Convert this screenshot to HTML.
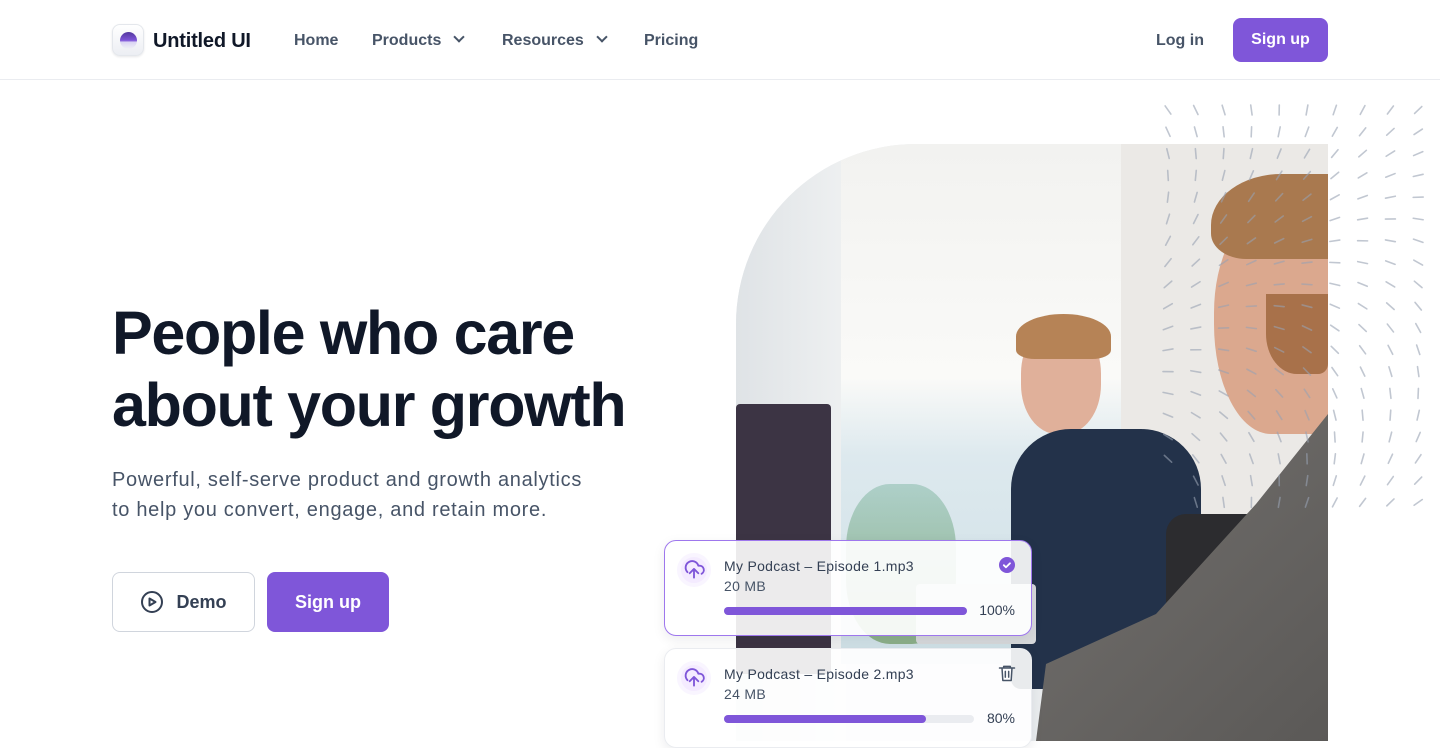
<!DOCTYPE html>
<html><head><meta charset="utf-8">
<style>
*{box-sizing:border-box;margin:0;padding:0}
body{width:1440px;height:741px;overflow:hidden;background:#fff;font-family:"Liberation Sans",sans-serif;position:relative}
.nav{height:80px;border-bottom:1px solid #eaecf0;position:relative}
.logo{position:absolute;left:112px;top:24px;width:32px;height:32px;border-radius:8px;background:linear-gradient(#fff,#eceef3);border:1px solid #e4e7ec;box-shadow:0 1px 2px rgba(16,24,40,.1)}
.logo i{position:absolute;left:7px;top:7px;width:17px;height:17px;border-radius:50%;background:linear-gradient(#53389e 0%,#7f56d9 50%,rgba(200,190,240,.6) 60%,rgba(255,255,255,0) 100%)}
.brand{position:absolute;left:153px;top:30px;font-size:20px;font-weight:bold;color:#101828;letter-spacing:-.2px}
.nl{position:absolute;top:32px;font-size:16px;font-weight:bold;color:#475467}
.chev{display:inline-block;width:8px;height:8px;border-right:2px solid #475467;border-bottom:2px solid #475467;transform:rotate(45deg);margin-left:14px;position:relative;top:-4px}
.btn{position:absolute;border-radius:8px;font-weight:bold;display:flex;align-items:center;justify-content:center}
h1{position:absolute;left:112px;top:297px;font-size:61px;line-height:72px;color:#101828;font-weight:bold;letter-spacing:-1.3px}
.sub{position:absolute;left:112px;top:465px;font-size:20px;line-height:30px;color:#475467;letter-spacing:.7px}
.photo{position:absolute;left:736px;top:144px;width:592px;height:597px;border-top-left-radius:180px;overflow:hidden;background:#e9ecee}
.photo div{position:absolute}
.card{position:absolute;left:664px;width:368px;border-radius:12px;background:rgba(255,255,255,.9);border:1px solid #eaecf0;box-shadow:0 4px 12px rgba(16,24,40,.08)}
.card .ic{position:absolute;left:12px;top:12px;width:34px;height:34px;border-radius:50%;background:#f4ebff;border:4px solid #f9f5ff}
.card .t{position:absolute;left:59px;top:17px;font-size:14px;color:#344054;letter-spacing:.3px}
.card .s{position:absolute;left:59px;top:37px;font-size:14px;color:#475467;letter-spacing:.3px}
.bar{position:absolute;left:59px;top:66px;height:8px;border-radius:4px;background:#eaecf0}
.bar b{display:block;height:8px;border-radius:4px;background:#7f56d9}
.pc{position:absolute;right:16px;top:61px;font-size:14px;color:#344054}
</style></head><body>
<div class="nav">
<div class="logo"><i></i></div>
<div class="brand">Untitled UI</div>
<div class="nl" style="left:294px">Home</div>
<div class="nl" style="left:372px">Products<span class="chev"></span></div>
<div class="nl" style="left:502px">Resources<span class="chev"></span></div>
<div class="nl" style="left:644px">Pricing</div>
<div class="nl" style="left:1156px">Log in</div>
<div class="btn" style="left:1233px;top:18px;width:95px;height:44px;background:#7f56d9;color:#fff;font-size:16px">Sign up</div>
</div>
<h1>People who care<br>about your growth</h1>
<div class="sub">Powerful, self-serve product and growth analytics<br>to help you convert, engage, and retain more.</div>
<div class="btn" style="left:112px;top:572px;width:143px;height:60px;border:1px solid #d0d5dd;color:#344054;font-size:18px;background:#fff">
<svg width="24" height="24" viewBox="0 0 24 24" style="margin-right:12px" fill="none" stroke="#344054" stroke-width="2" stroke-linejoin="round"><circle cx="12" cy="12" r="10"/><path d="M9.5 8.5v7l6-3.5z"/></svg>Demo</div>
<div class="btn" style="left:267px;top:572px;width:122px;height:60px;background:#7f56d9;color:#fff;font-size:18px">Sign up</div>

<div class="photo">
<div style="left:0;top:0;width:110px;height:597px;background:linear-gradient(90deg,#dfe3e6,#eef0f1)"></div>
<div style="left:105px;top:0;width:280px;height:520px;background:linear-gradient(#f2f2f0,#fafaf8 45%,#dde9ee 60%,#cfe0e6)"></div>
<div style="left:385px;top:0;width:207px;height:597px;background:#ebe9e6"></div>
<div style="left:0;top:260px;width:95px;height:270px;background:#3c3444;border-radius:4px"></div>
<div style="left:110px;top:340px;width:110px;height:160px;background:linear-gradient(#8fbfb0,#5e8e4a);border-radius:40%;opacity:.6"></div>
<div style="left:285px;top:180px;width:80px;height:110px;background:#e0b09a;border-radius:45%"></div>
<div style="left:280px;top:170px;width:95px;height:45px;background:#b68356;border-radius:50% 50% 20% 20%"></div>
<div style="left:275px;top:285px;width:190px;height:260px;background:#23324a;border-radius:60px 60px 10px 10px"></div>
<div style="left:430px;top:370px;width:110px;height:150px;background:#2c2c2f;border-radius:20px"></div>
<div style="left:478px;top:70px;width:114px;height:220px;background:#dba88e;border-radius:45% 0 0 50%"></div>
<div style="left:475px;top:30px;width:117px;height:85px;background:#a9794f;border-radius:60% 0 0 30%"></div>
<div style="left:530px;top:150px;width:62px;height:80px;background:#a8714a;border-radius:0 0 10px 50%"></div>
<div style="left:0;top:0;width:592px;height:597px;background:linear-gradient(135deg,#8a8784,#5b5957);clip-path:polygon(592px 270px,592px 597px,300px 597px,310px 520px,420px 470px,520px 360px)"></div>
<div style="left:180px;top:440px;width:120px;height:60px;background:#d7d9db;border-radius:4px"></div>
</div>

<svg id="dots" style="position:absolute;left:0;top:0" width="1440" height="741"></svg>

<div class="card" style="top:540px;height:96px;border-color:#9e77ed">
<div class="ic"><svg width="26" height="26" viewBox="0 0 24 24" style="position:absolute;left:0;top:0" fill="none" stroke="#7f56d9" stroke-width="1.7" stroke-linecap="round" stroke-linejoin="round"><path d="M8 15l4-4 4 4M12 11v8M19 15.5A4 4 0 0 0 17 8h-1A6 6 0 1 0 6 14"/></svg></div>
<div class="t">My Podcast – Episode 1.mp3</div><div class="s">20 MB</div>
<svg width="16" height="16" viewBox="0 0 16 16" style="position:absolute;right:16px;top:16px"><circle cx="8" cy="8" r="8" fill="#7f56d9"/><path d="M4.8 8.2l2.2 2.1 4-4" stroke="#fff" stroke-width="1.8" fill="none" stroke-linecap="round" stroke-linejoin="round"/></svg>
<div class="bar" style="width:243px"><b style="width:243px"></b></div>
<div class="pc">100%</div>
</div>
<div class="card" style="top:648px;height:100px">
<div class="ic"><svg width="26" height="26" viewBox="0 0 24 24" style="position:absolute;left:0;top:0" fill="none" stroke="#7f56d9" stroke-width="1.7" stroke-linecap="round" stroke-linejoin="round"><path d="M8 15l4-4 4 4M12 11v8M19 15.5A4 4 0 0 0 17 8h-1A6 6 0 1 0 6 14"/></svg></div>
<div class="t">My Podcast – Episode 2.mp3</div><div class="s">24 MB</div>
<svg width="20" height="20" viewBox="0 0 24 24" style="position:absolute;right:14px;top:14px" fill="none" stroke="#475467" stroke-width="1.8" stroke-linecap="round" stroke-linejoin="round"><path d="M3 6h18M8 6V4h8v2M6 6l1 15h10l1-15M10 10v7M14 10v7"/></svg>
<div class="bar" style="width:250px"><b style="width:202px"></b></div>
<div class="pc">80%</div>
</div>
<script>
var s=document.getElementById('dots'),h='';
for(var r=0;r<19;r++){for(var c=0;c<10;c++){
var x=1168+c*27.8,y=110+r*21.8;
if(c==0&&r>16)continue;
var t=(125-10.5*r-9*c)*Math.PI/180;
var ux=Math.cos(t)*5,uy=-Math.sin(t)*5;
h+='<line x1="'+(x-ux)+'" y1="'+(y-uy)+'" x2="'+(x+ux)+'" y2="'+(y+uy)+'" stroke="#98a2b3" stroke-opacity=".6" stroke-width="1.6" stroke-linecap="round"/>';
}}
s.innerHTML=h;
</script>
</body></html>
